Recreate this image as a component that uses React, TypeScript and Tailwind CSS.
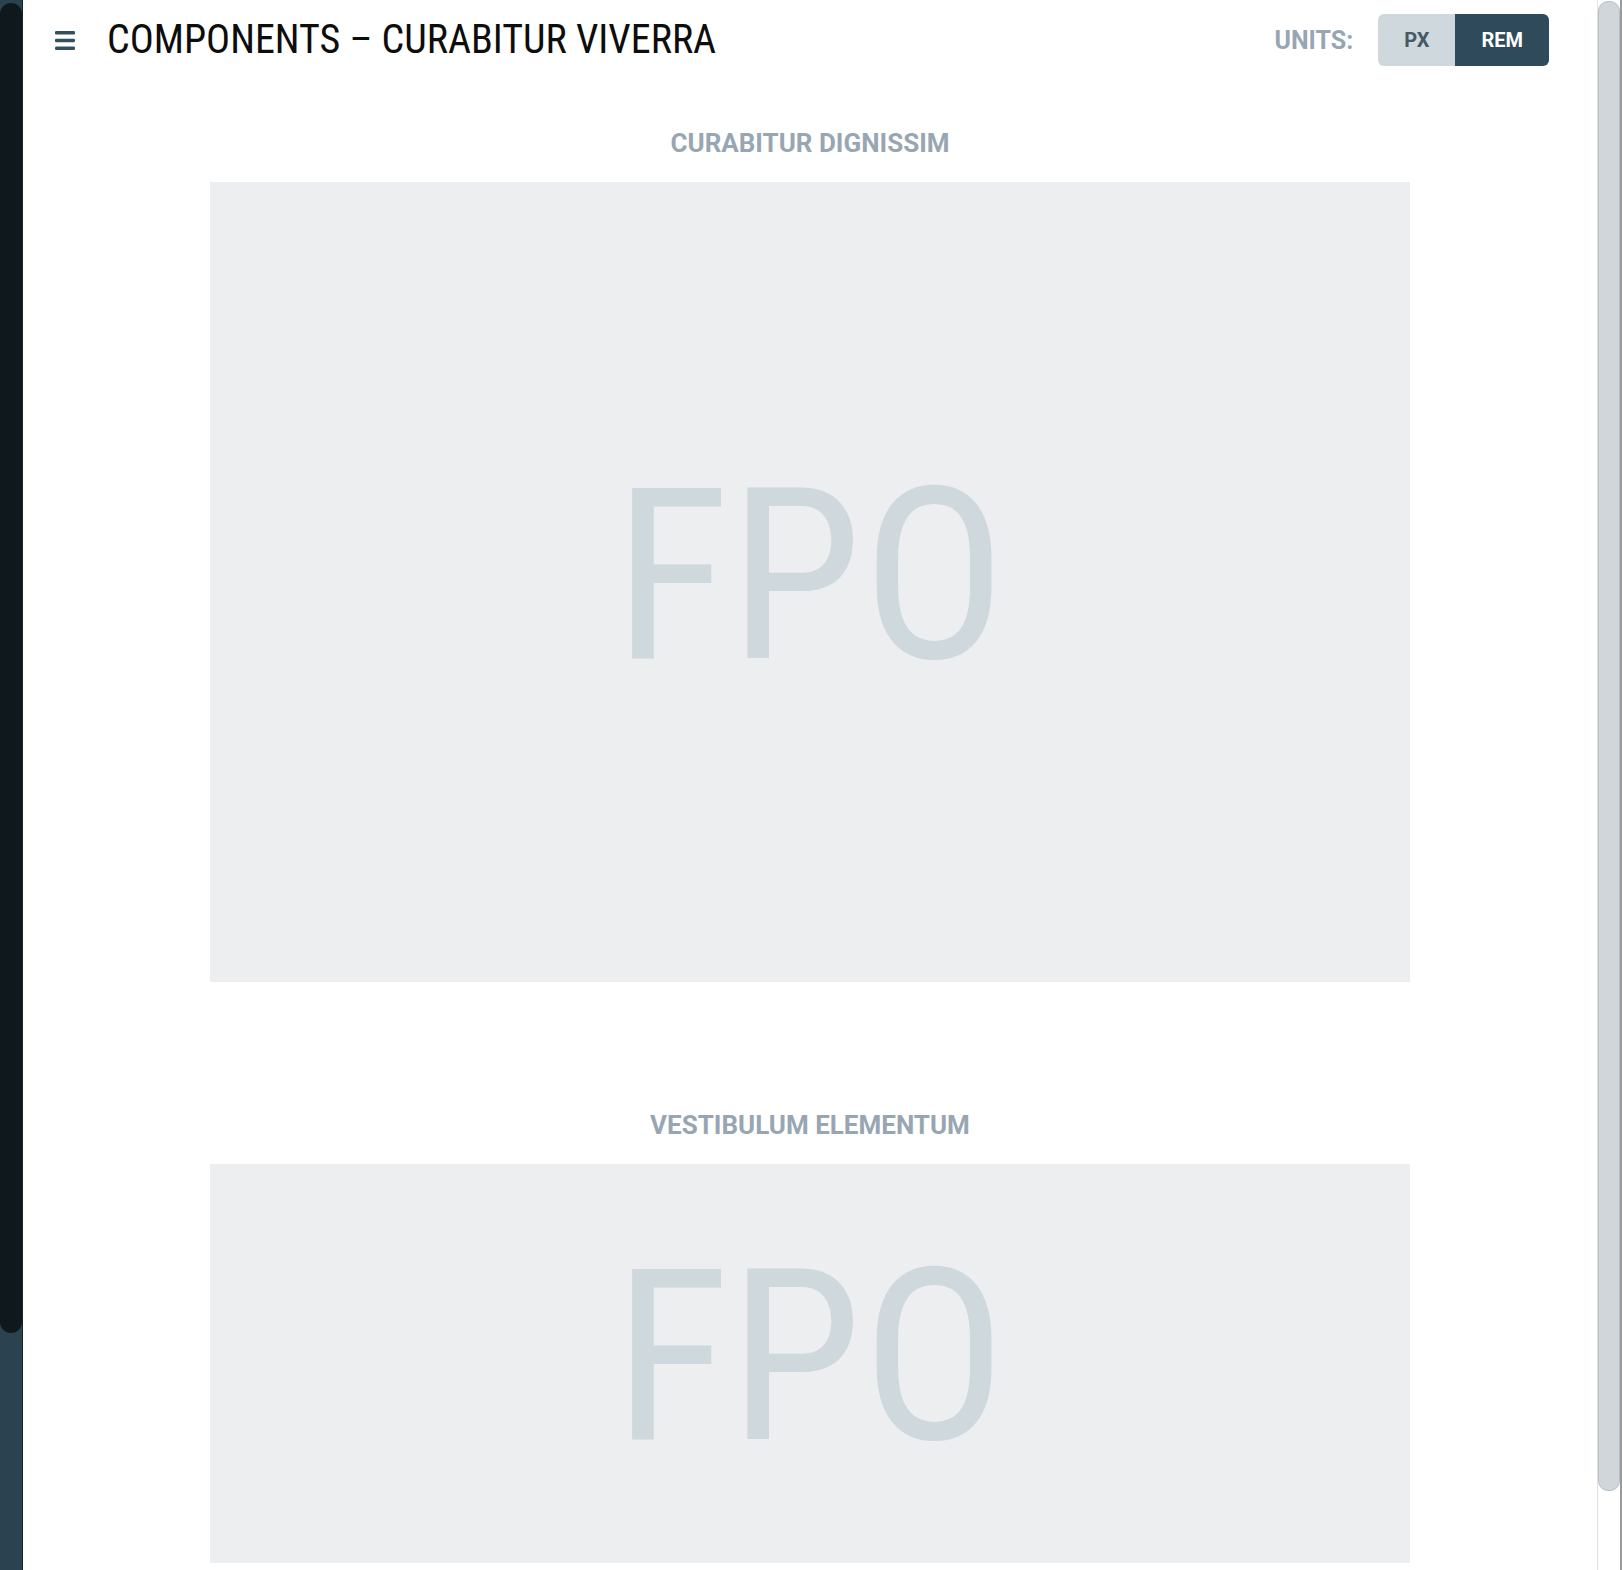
import { Fragment } from "react";

const sections = [
  { title: "CURABITUR DIGNISSIM", height: "h-[800px]", shift: "mb-[13px]" },
  { title: "VESTIBULUM ELEMENTUM", height: "h-[399px]", shift: "mb-[14px]" },
];

const HamburgerIcon = () => (
  <svg width="20" height="19" viewBox="0 0 20 19" className="shrink-0">
    <rect x="0" y="0" width="20" height="3.4" rx="1.2" fill="#34505f" />
    <rect x="0" y="7.8" width="20" height="3.4" rx="1.2" fill="#34505f" />
    <rect x="0" y="15.6" width="20" height="3.4" rx="1.2" fill="#34505f" />
  </svg>
);

const App = () => {
  return (
    <div className="flex h-[1570px] w-[1622px] overflow-hidden bg-white font-['Roboto',sans-serif]">
      {/* left pane scrollbar */}
      <div className="flex w-[23px] shrink-0 flex-col border-r border-[#16232b] bg-[#2b4250] pt-[3px]">
        <div className="h-[1330px] w-full rounded-b-[11px] rounded-t-[11px] bg-[#0f181d]" />
      </div>

      {/* main content */}
      <div className="flex flex-1 flex-col">
        <header className="flex h-20 shrink-0 items-center pl-[32px] pr-[48px]">
          <HamburgerIcon />
          <h1 className="ml-[32px] font-['Roboto_Condensed','DejaVu_Sans_Condensed',sans-serif] text-[40px] font-normal leading-none text-[#0d0d0d]">
            COMPONENTS – CURABITUR VIVERRA
          </h1>
          <div className="ml-auto flex items-center gap-[25px]">
            <span className="text-[25px] font-bold leading-none text-[#98a6b3]">UNITS:</span>
            <div className="flex h-[52px] overflow-hidden rounded-md text-[20px] font-bold leading-none">
              <button className="flex items-center bg-[#cfd8dc] px-[26px] text-[#465a65]">PX</button>
              <button className="flex items-center bg-[#2f4a5b] px-[26px] text-white">REM</button>
            </div>
          </div>
        </header>

        <main className="flex flex-col items-center pt-[50px]">
          {sections.map((s, i) => (
            <Fragment key={s.title}>
              <h2
                className={
                  "mb-[26px] text-[26px] font-bold leading-[26px] text-[#98a6b3] " +
                  (i > 0 ? "mt-[130px]" : "")
                }
              >
                {s.title}
              </h2>
              <div className={"flex w-[1200px] shrink-0 items-center justify-center bg-[#eceef0] " + s.height}>
                <span
                  className={
                    "font-['Roboto_Condensed',sans-serif] text-[240px] font-normal leading-none text-[#cfd8dc] " +
                    s.shift
                  }
                >
                  FPO
                </span>
              </div>
            </Fragment>
          ))}
        </main>
      </div>

      {/* right scrollbar */}
      <div className="flex w-[25px] shrink-0 border-l border-[#e3e3e3] bg-white">
        <div className="flex flex-1 flex-col pt-px">
          <div className="h-[1490px] w-[22px] rounded-[10px] border border-[#b9c0c5] bg-[#d1d6da]" />
        </div>
        <div className="w-[2px] bg-[#9a9a9a]" />
      </div>
    </div>
  );
};

export default App;
